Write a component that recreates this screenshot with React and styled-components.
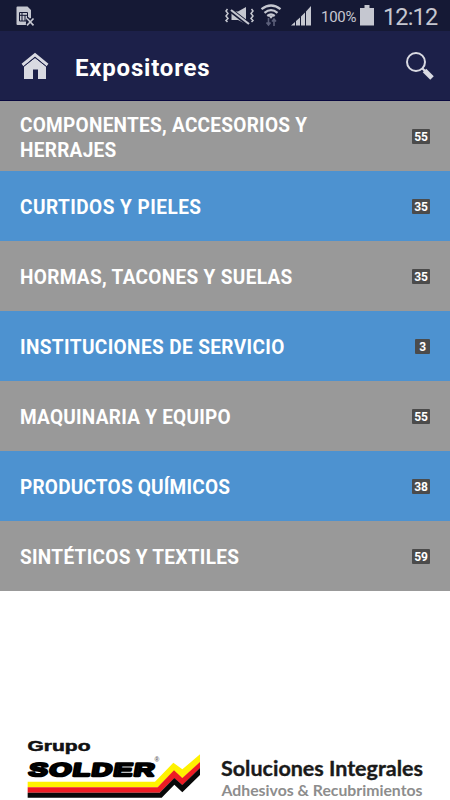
import React from "react";
import styled, { createGlobalStyle } from "styled-components";

const Global = createGlobalStyle`
  * { box-sizing: border-box; }
  body { margin: 0; background: #fff; overflow: hidden; font-family: Roboto, "Liberation Sans", sans-serif; }
`;

const Screen = styled.div`
  width: 450px;
  height: 800px;
  display: flex;
  flex-direction: column;
  background: #fff;
  overflow: hidden;
`;

const StatusBar = styled.div`
  height: 31px;
  flex: none;
  display: flex;
  align-items: flex-start;
  justify-content: space-between;
  background: #151935;
  color: #c5c7d0;
`;

const StatusGroup = styled.div`
  display: flex;
  height: 31px;
`;

const Percent = styled.span`
  width: 38px;
  margin-left: 3px;
  font-size: 15px;
  line-height: 34px;
  letter-spacing: -0.25px;
  white-space: nowrap;
`;

const Clock = styled.span`
  width: 67px;
  font-size: 23.5px;
  line-height: 34px;
  letter-spacing: -0.85px;
  white-space: nowrap;
`;

const Header = styled.header`
  height: 70px;
  flex: none;
  display: flex;
  align-items: center;
  padding: 0 16px 0 21px;
  background: #1c2049;
  border-bottom: 1px solid #08083f;
`;

const Title = styled.h1`
  flex: 1;
  margin: 4px 0 0 26px;
  color: #fff;
  font-size: 24px;
  line-height: 30px;
  font-weight: 700;
  letter-spacing: 0.8px;
`;

const List = styled.ul`
  margin: 0;
  padding: 0;
  list-style: none;
`;

const Row = styled.li`
  height: 70px;
  display: flex;
  align-items: center;
  justify-content: space-between;
  padding: 0 20px 0 20px;
  background: ${(p) => (p.$blue ? "#4d92d0" : "#999999")};
`;

const Label = styled.span`
  width: 330px;
  padding-top: 3px;
  color: #fff;
  font-size: 20px;
  line-height: 25px;
  font-weight: 700;
  letter-spacing: ${(p) => p.$spacing}px;
  transform: scaleX(0.95);
  transform-origin: left center;
`;

const Badge = styled.span`
  min-width: 15px;
  height: 15px;
  padding: 0 2.5px;
  border-radius: 1px;
  background: #4b4b4b;
  color: #fff;
  font-size: 12px;
  line-height: 16px;
  font-weight: 700;
  text-align: center;
  letter-spacing: -0.3px;
`;

const Sponsor = styled.footer`
  flex: 1;
  display: flex;
  align-items: flex-end;
`;

const Icon = styled.svg`
  display: block;
  flex: none;
  overflow: visible;
`;

const rows = [
  { lines: ["COMPONENTES, ACCESORIOS Y", "HERRAJES"], count: 55, spacing: 0.3 },
  { lines: ["CURTIDOS Y PIELES"], count: 35, spacing: 0.5 },
  { lines: ["HORMAS, TACONES Y SUELAS"], count: 35, spacing: 0.35 },
  { lines: ["INSTITUCIONES DE SERVICIO"], count: 3, spacing: 0.42 },
  { lines: ["MAQUINARIA Y EQUIPO"], count: 55, spacing: 0.27 },
  { lines: ["PRODUCTOS QUÍMICOS"], count: 38, spacing: 0.23 },
  { lines: ["SINTÉTICOS Y TEXTILES"], count: 59, spacing: 0.32 },
];

function SimIcon() {
  return (
    <Icon width="40" height="31" viewBox="0 0 40 31">
      <path d="M17.5 6.5H27.5L31 10V18L26 21.5V25H17.5Q16.5 25 16.5 24V7.5Q16.5 6.5 17.5 6.5Z" fill="#c5c7d0" />
      <path d="M19.5 12.5H27.5V21H19.5ZM19.5 15.3H27.5M22 12.5V21M25 15V21" fill="none" stroke="#151935" />
      <path d="M27 18.5L33.5 25.3M33.5 18.5L27 25.3" stroke="#151935" strokeWidth="4" />
      <path d="M27 18.5L33.5 25.3M33.5 18.5L27 25.3" stroke="#c5c7d0" strokeWidth="1.7" />
    </Icon>
  );
}

function ConnectivityIcons() {
  return (
    <Icon width="95" height="31" viewBox="223 0 95 31" fill="none" stroke="#c5c7d0">
      <path d="M231.5 11.5H238L246 7V24L238 20H231.5Z" fill="#c5c7d0" stroke="none" />
      <path d="M231 10.5L249 24.5" stroke="#151935" strokeWidth="4.5" />
      <path d="M231 10L249 24" strokeWidth="2.2" />
      <path d="M227.5 9L226 11L228 13.5L226 16L228 18.5L226 20.5L227.5 22M251.5 9L253 11L251 13.5L253 16L251 18.5L253 20.5L251.5 22" strokeWidth="1.5" />
      <path d="M261.5 9.2Q271 1.8 280.5 9.2M264.5 12.8Q271 7.5 277.5 12.8M267.3 16Q271 13 274.7 16" strokeWidth="2.3" />
      <path d="M268.8 16.3Q271 15 273.2 16.3L271 18.8Z" fill="#c5c7d0" stroke="none" />
      <path d="M268.5 18V25M266.5 22.5L268.5 25L270.5 22.5M274 26V19M272 21.5L274 19L276 21.5" stroke="#5c607a" strokeWidth="1.6" />
      <path d="M291 25.5L295 22V25.5ZM296 21L300 17.5V25.5H296ZM301 16.5L305 12.5V25.5H301ZM306 11.5L311 6V25.5H306Z" fill="#c5c7d0" stroke="none" />
    </Icon>
  );
}

function BatteryIcon() {
  return (
    <Icon width="24" height="31" viewBox="359 0 24 31">
      <path d="M364.5 5H369.5V8H374V25.5H360V8H364.5Z" fill="#c5c7d0" />
    </Icon>
  );
}

function HomeIcon() {
  return (
    <Icon width="28" height="28" viewBox="21 52 28 28">
      <path d="M22.5 65L35 54.7L47.5 65" fill="none" stroke="#d9dae2" strokeWidth="3" />
      <path d="M24 66.2L35 57.7L46 66.2V79H38V69.5H33V79H24Z" fill="#d9dae2" />
      <path d="M23.5 66.7L35 57.5L46.5 66.7" fill="none" stroke="#1c2049" strokeWidth="1" />
    </Icon>
  );
}

function SearchIcon() {
  return (
    <Icon width="29" height="29" viewBox="405 51 29 29" fill="none" stroke="#d9dae2">
      <circle cx="416" cy="62" r="9" strokeWidth="2" />
      <path d="M422.5 68.5L426 72" strokeWidth="2.2" />
      <path d="M424.5 70.5L432 78" strokeWidth="5" />
    </Icon>
  );
}

function SolderLogo() {
  return (
    <Icon width="450" height="70" viewBox="0 730 450 70">
      <g fontFamily="Liberation Sans, sans-serif" fontWeight="700" fill="#111">
        <text x="27.5" y="751" fontSize="14" stroke="#111" strokeWidth=".5" textLength="63" lengthAdjust="spacingAndGlyphs">Grupo</text>
        <text transform="translate(28 776) skewX(-10)" fontSize="18.5" stroke="#000" strokeWidth="2.3" strokeLinejoin="round" letterSpacing="1" textLength="127" lengthAdjust="spacingAndGlyphs">SOLDER</text>
        <text x="154.5" y="762" fontSize="6.5" fill="#666" fontWeight="700">®</text>
      </g>
      <g transform="translate(10 730) scale(.33333)">
        <path d="M53 155H435L490 98L517 118L570 73V97L517 145L492 122L443 172H53Z" fill="#fff200" />
        <path d="M53 172H443L492 121L517 144L570 96V115L517 166L493 145L449 188H53Z" fill="#ed1c24" />
        <path d="M53 188H449L493 144L517 165L570 114V135L517 187L493 164L455 203H53Z" fill="#080808" />
      </g>
      <g fontFamily="Lato, Open Sans, sans-serif">
        <text x="221" y="775.5" fontSize="20" fontWeight="700" fill="#1a1a1a" stroke="#1a1a1a" strokeWidth=".35" textLength="202" lengthAdjust="spacingAndGlyphs">Soluciones Integrales</text>
        <text x="221.5" y="796" fontSize="15.5" fontWeight="700" fill="#8d8d8d" textLength="201" lengthAdjust="spacingAndGlyphs">Adhesivos &amp; Recubrimientos</text>
      </g>
    </Icon>
  );
}

export default function App() {
  return (
    <Screen>
      <Global />
      <StatusBar>
        <SimIcon />
        <StatusGroup>
          <ConnectivityIcons />
          <Percent>100%</Percent>
          <BatteryIcon />
          <Clock>12:12</Clock>
        </StatusGroup>
      </StatusBar>
      <Header>
        <HomeIcon />
        <Title>Expositores</Title>
        <SearchIcon />
      </Header>
      <List>
        {rows.map((row, i) => (
          <Row key={row.lines[0]} $blue={i % 2 === 1}>
            <Label $spacing={row.spacing}>
              {row.lines.map((line, n) => (
                <React.Fragment key={line}>
                  {n > 0 && <br />}
                  {line}
                </React.Fragment>
              ))}
            </Label>
            <Badge>{row.count}</Badge>
          </Row>
        ))}
      </List>
      <Sponsor>
        <SolderLogo />
      </Sponsor>
    </Screen>
  );
}
